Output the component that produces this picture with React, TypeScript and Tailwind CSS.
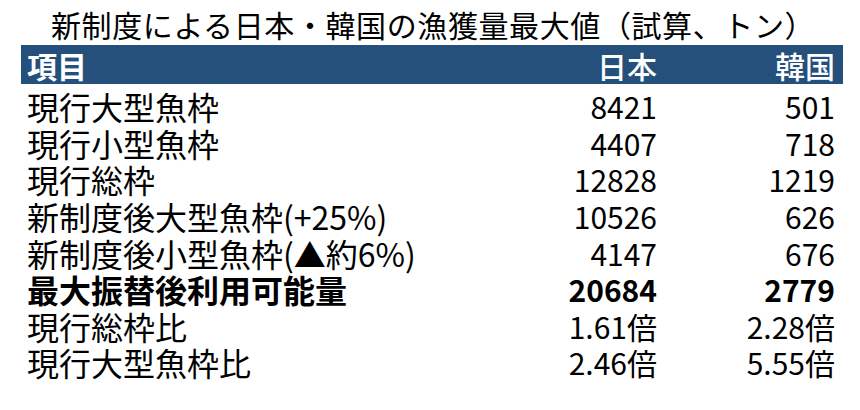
const rows: { label: string; jp: string; kr: string; bold?: boolean }[] = [
  { label: "現行大型魚枠", jp: "8421", kr: "501" },
  { label: "現行小型魚枠", jp: "4407", kr: "718" },
  { label: "現行総枠", jp: "12828", kr: "1219" },
  { label: "新制度後大型魚枠(+25%)", jp: "10526", kr: "626" },
  { label: "新制度後小型魚枠(▲約6%)", jp: "4147", kr: "676" },
  { label: "最大振替後利用可能量", jp: "20684", kr: "2779", bold: true },
  { label: "現行総枠比", jp: "1.61倍", kr: "2.28倍" },
  { label: "現行大型魚枠比", jp: "2.46倍", kr: "5.55倍" },
];

export default function App() {
  return (
    <div
      className="w-[860px] h-[410px] bg-white text-black overflow-hidden"
      style={{ fontFamily: '"Noto Sans CJK JP", "Noto Sans", sans-serif' }}
    >
      <h1 className="h-[45px] pt-[6px] pl-[51px] text-left text-[30px] leading-[36px] tracking-[0.6px] font-normal whitespace-nowrap">
        新制度による日本・韓国の漁獲量最大値（試算、トン）
      </h1>

      <div className="mx-[21px] w-[822px]">
        <div className="flex items-center h-[39px] bg-[#25507b] text-white text-[30px] leading-[36px] pl-[6px] pr-[8px]">
          <div className="flex-1 font-bold">項目</div>
          <div className="w-[180px] text-right font-medium">日本</div>
          <div className="w-[178px] text-right font-medium">韓国</div>
        </div>

        <div className="mt-[4px]">
          {rows.map((r) => (
            <div
              key={r.label}
              className={`flex items-center h-[36.6px] leading-[36px] pl-[6px] pr-[8px] ${
                r.bold ? "font-bold" : "font-normal"
              }`}
            >
              <div className="flex-1 text-[32px] whitespace-nowrap">{r.label}</div>
              <div className={`w-[180px] text-right text-[30px] ${r.bold ? "font-semibold" : ""}`}>{r.jp}</div>
              <div className={`w-[178px] text-right text-[30px] ${r.bold ? "font-semibold" : ""}`}>{r.kr}</div>
            </div>
          ))}
        </div>
      </div>
    </div>
  );
}
